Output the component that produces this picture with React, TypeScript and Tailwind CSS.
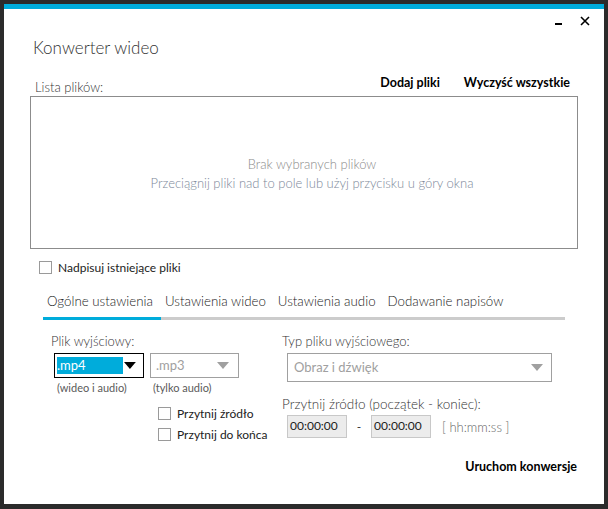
import React from 'react'

function Check({ className = '' }: { className?: string }) {
  return <span className={`inline-block w-[13px] h-[13px] border border-[#9a9a9a] bg-white ${className}`} />
}

function Arrow({ color }: { color: string }) {
  return (
    <svg width="12" height="7" viewBox="0 0 12 7">
      <polygon points="0,0 12,0 6,7" fill={color} />
    </svg>
  )
}

export default function App() {
  return (
    <div className="w-[608px] h-[509px] bg-[#2b2b2b] pt-[4px] pl-[4px] pr-[4px] pb-[5px] font-['Lato','Open_Sans',sans-serif] text-[#333]">
      <div className="h-full bg-white flex flex-col">
        <div className="h-[5px] bg-[#00acdb]" />

        {/* window controls */}
        <div className="h-[24px] flex items-center justify-end pr-[14px] gap-[18px]">
          <span className="block w-[7px] h-[2px] bg-black mt-[6px]" />
          <svg width="10" height="10" viewBox="0 0 10 10">
            <path d="M1 1 L9 9 M9 1 L1 9" stroke="#000" strokeWidth="1.6" />
          </svg>
        </div>

        <div className="px-[26px] flex flex-col">
          <h1 className="mt-[3px] pl-[3px] text-[17px] leading-[24px] font-light text-[#333]">Konwerter wideo</h1>

          <div className="mt-[10px] h-[26px] flex justify-between">
            <span className="self-end pl-[5px] text-[13px] leading-[18px] font-light">Lista plików:</span>
            <div className="flex gap-[24px] pr-[8px] text-[12.5px] leading-[16px] font-bold text-black">
              <button>Dodaj pliki</button>
              <button>Wyczyść wszystkie</button>
            </div>
          </div>

          <div className="h-[153px] border border-[#8c8c8c] flex flex-col items-center justify-center pt-[2px] pl-[16px] text-[13px] leading-[19px] font-light">
            <p className="text-[#8a8a8a]">Brak wybranych plików</p>
            <p className="text-[#7c8899]">Przeciągnij pliki nad to pole lub użyj przycisku u góry okna</p>
          </div>

          <label className="mt-[12px] ml-[9px] flex items-center gap-[6px] text-[12px] leading-[13px] text-[#222]">
            <Check />
            Nadpisuj istniejące pliki
          </label>

          {/* tabs */}
          <div className="mt-[18px] mx-[13px] flex text-[13.3px] leading-[18px] font-light text-[#222]">
            <button className="pl-[4px] pr-[8px] pb-[7px] border-b-[3px] border-[#00acdb]">Ogólne ustawienia</button>
            <button className="pl-[4px] pr-[8px] pb-[7px] border-b-[3px] border-[#cccccc]">Ustawienia wideo</button>
            <button className="pl-[4px] pr-[8px] pb-[7px] border-b-[3px] border-[#cccccc]">Ustawienia audio</button>
            <button className="pl-[4px] pr-[8px] pb-[7px] border-b-[3px] border-[#cccccc]">Dodawanie napisów</button>
            <div className="flex-1 border-b-[3px] border-[#cccccc]" />
          </div>

          <div className="flex pl-[21px]">
            {/* left column */}
            <div className="w-[231px] flex flex-col">
              <span className="mt-[13px] text-[13px] leading-[16px] font-light">Plik wyjściowy:</span>
              <div className="mt-[4px] ml-[3px] flex gap-[6px]">
                <div className="w-[90px] h-[25px] border border-black flex items-center pl-[2px] pr-[7px] gap-[1px]">
                  <span className="w-[67px] h-[17px] bg-[#00acdb] text-white text-[13px] leading-[17px]">.mp4</span>
                  <Arrow color="#000" />
                </div>
                <div className="w-[89px] h-[25px] border border-[#a0a0a0] flex items-center justify-between pl-[5px] pr-[9px] text-[13px] text-[#a0a0a0]">
                  <span>.mp3</span>
                  <Arrow color="#a0a0a0" />
                </div>
              </div>
              <div className="mt-[3px] flex text-[11px] leading-[14px] text-[#5a5a5a]">
                <span className="ml-[6px] w-[96px]">(wideo i audio)</span>
                <span>(tylko audio)</span>
              </div>
              <div className="mt-[8px] ml-[107px] flex flex-col text-[12px] leading-[21px] text-[#222]">
                <label className="flex items-center gap-[6px]"><Check />Przytnij źródło</label>
                <label className="flex items-center gap-[6px]"><Check />Przytnij do końca</label>
              </div>
            </div>

            {/* right column */}
            <div className="flex flex-col">
              <span className="mt-[13px] text-[13px] leading-[16px] font-light">Typ pliku wyjściowego:</span>
              <div className="mt-[4px] ml-[5px] w-[265px] h-[29px] border border-[#a0a0a0] flex items-center justify-between pl-[6px] pr-[8px] text-[13px] text-[#a0a0a0]">
                <span>Obraz i dźwięk</span>
                <Arrow color="#a0a0a0" />
              </div>
              <span className="mt-[14px] text-[13.5px] leading-[16px] font-light">Przytnij źródło (początek - koniec):</span>
              <div className="mt-[3px] ml-[5px] flex items-center text-[12px]">
                <span className="w-[60px] h-[23px] bg-[#ececec] border border-[#c8c8c8] pl-[2px] leading-[20px] text-[#222]">00:00:00</span>
                <span className="w-[24px] text-center text-[#333]">-</span>
                <span className="w-[60px] h-[23px] bg-[#ececec] border border-[#c8c8c8] pl-[2px] leading-[20px] text-[#222]">00:00:00</span>
                <span className="ml-[11px] mt-[3px] text-[#666] text-[13px] font-light">[ hh:mm:ss ]</span>
              </div>
            </div>
          </div>

          <div className="mt-[14px] flex justify-end pr-[1px]">
            <button className="text-[12.5px] leading-[16px] font-bold text-black">Uruchom konwersje</button>
          </div>
        </div>
      </div>
    </div>
  )
}
